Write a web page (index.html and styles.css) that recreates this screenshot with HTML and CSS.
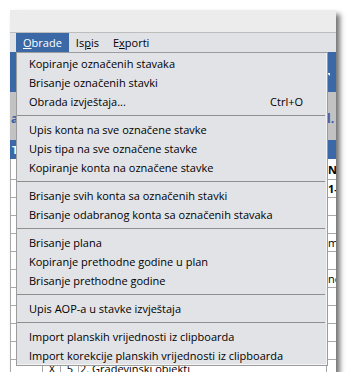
FILE: index.html
```html
<!DOCTYPE html>
<html lang="hr">
<head>
<meta charset="UTF-8">
<title>Obrade</title>
<link rel="stylesheet" href="styles.css">
</head>
<body>
<div class="window">
  <!-- empty title / toolbar strip -->
  <div class="titlebar"></div>

  <!-- menu bar -->
  <div class="menubar">
    <span class="menubar-item active"><u>O</u>brade</span>
    <span class="menubar-item">Is<u>p</u>is</span>
    <span class="menubar-item">E<u>x</u>porti</span>
  </div>

  <!-- form content behind the open menu -->
  <div class="content">
    <div class="band-blue"><span class="corner"></span></div>
    <div class="band-gray">
      <span class="caption">a</span>
      <span class="caption caption-right">l.</span>
    </div>
    <table class="grid">
      <colgroup>
        <col class="c1"><col class="c2"><col class="c3"><col class="c4"><col class="c5">
      </colgroup>
      <tr class="head"><td>T</td><td></td><td></td><td></td><td></td></tr>
      <tr class="first"><td></td><td></td><td></td><td></td><td class="bold">NI</td></tr>
      <tr><td></td><td></td><td></td><td></td><td class="bold">1-</td></tr>
      <tr><td></td><td></td><td></td><td></td><td></td></tr>
      <tr><td></td><td></td><td></td><td></td><td></td></tr>
      <tr><td></td><td></td><td></td><td></td><td>m</td></tr>
      <tr><td></td><td></td><td></td><td></td><td></td></tr>
      <tr><td></td><td></td><td></td><td></td><td>ne</td></tr>
      <tr><td></td><td></td><td></td><td></td><td></td></tr>
      <tr><td></td><td></td><td></td><td></td><td></td></tr>
      <tr><td></td><td></td><td></td><td></td><td></td></tr>
      <tr><td></td><td></td><td></td><td></td><td></td></tr>
      <tr><td></td><td class="center">X</td><td class="center">5</td><td>2. Građevinski objekti</td><td></td></tr>
    </table>
  </div>

  <!-- open "Obrade" drop-down -->
  <div class="dropdown">
    <div class="item">Kopiranje označenih stavaka</div>
    <div class="item">Brisanje označenih stavki</div>
    <div class="item"><span>Obrada izvještaja...</span><span class="shortcut">Ctrl+O</span></div>
    <div class="separator"></div>
    <div class="item">Upis konta na sve označene stavke</div>
    <div class="item">Upis tipa na sve označene stavke</div>
    <div class="item">Kopiranje konta na označene stavke</div>
    <div class="separator"></div>
    <div class="item">Brisanje svih konta sa označenih stavki</div>
    <div class="item">Brisanje odabranog konta sa označenih stavaka</div>
    <div class="separator"></div>
    <div class="item">Brisanje plana</div>
    <div class="item">Kopiranje prethodne godine u plan</div>
    <div class="item">Brisanje prethodne godine</div>
    <div class="separator"></div>
    <div class="item">Upis AOP-a u stavke izvještaja</div>
    <div class="separator"></div>
    <div class="item">Import planskih vrijednosti iz clipboarda</div>
    <div class="item">Import korekcije planskih vrijednosti iz clipboarda</div>
  </div>
</div>
</body>
</html>
```

FILE: styles.css
```css
/* Page */
body {
  margin: 0;
  padding: 10px 0 0 10px;
  background-color: #ffffff;
  font-family: "Open Sans", "Noto Sans", sans-serif;
  font-size: 11px;
  color: #000000;
}

/* Application window */
.window {
  position: relative;
  width: 326px;
  height: 362px;
  background-color: #ececec;
  box-shadow: 4px 4px 5px rgba(0, 0, 0, 0.55);
  overflow: hidden;
}

.titlebar {
  height: 22px;
  border-bottom: 1px solid #bdbdbd;
}

/* Menu bar */
.menubar {
  display: flex;
  height: 19px;
  line-height: 19px;
  padding-left: 6px;
  background-color: #e1e2e6;
}

.menubar-item {
  padding: 0 7px;
}

.menubar-item.active {
  background-color: #3b68a6;
  color: #ffffff;
}

/* Content behind the menu */
.content {
  background-color: #ffffff;
}

.band-blue {
  position: relative;
  height: 40px;
  background-color: #3b68a6;
}

.corner {
  position: absolute;
  right: 6px;
  top: 21px;
  border-left: 3px solid transparent;
  border-top: 3px solid #ffffff;
}

.band-gray {
  display: flex;
  align-items: center;
  height: 48px;
  padding-top: 4px;
  box-sizing: border-box;
  background-color: #c2c2c2;
}

.caption {
  color: #2f5fa8;
  font-weight: bold;
  font-size: 12px;
  padding-left: 1px;
}

.caption-right {
  margin-left: auto;
  width: 9px;
}

.grid {
  border-collapse: collapse;
  table-layout: fixed;
  width: 350px;
}

.grid .c1 { width: 32px; }
.grid .c2 { width: 18px; }
.grid .c3 { width: 18px; }
.grid .c4 { width: 248px; }
.grid .c5 { width: 34px; }

.grid td {
  height: 17px;
  padding: 0 0 0 1px;
  border: 1px solid #a9a9a9;
  white-space: nowrap;
  overflow: hidden;
  line-height: 17px;
}

.grid .head td {
  background-color: #3b68a6;
  color: #ffffff;
  font-weight: bold;
  border-color: #3b68a6;
}

.grid .first td {
  height: 20px;
}

.grid td.bold {
  font-weight: bold;
}

.grid td.center {
  text-align: center;
}

/* Drop-down menu */
.dropdown {
  position: absolute;
  top: 42px;
  left: 6px;
  width: 312px;
  box-sizing: border-box;
  padding-top: 1px;
  background-color: #e2e3e7;
  border: 1px solid #9c9c9c;
  box-shadow: inset -1px -1px 0 #f4f4f4;
}

.item {
  display: flex;
  justify-content: space-between;
  height: 19px;
  line-height: 19px;
  padding: 0 24px 0 12px;
  white-space: nowrap;
}

.separator {
  height: 1px;
  margin: 4px 2px 4px 0;
  background-color: #8f8f8f;
}
```
